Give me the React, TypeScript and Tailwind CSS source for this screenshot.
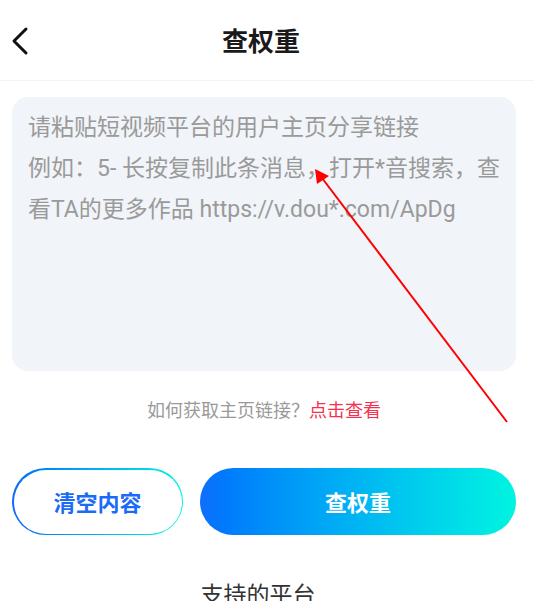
export default function App() {
  return (
    <div
      className="relative w-[534px] h-[601px] overflow-hidden bg-white"
      style={{ fontFamily: '"Noto Sans CJK SC", "Noto Sans", sans-serif' }}
    >
      <div className="relative h-[81px] border-b border-[#f4f4f4] flex items-center justify-center pr-[12px]">
        <svg className="absolute left-[10px] top-[26px]" width="20" height="30" viewBox="0 0 20 30">
          <polyline points="16,3 4,15 16,27" fill="none" stroke="#111" strokeWidth="3" strokeLinecap="round" strokeLinejoin="round" />
        </svg>
        <h1 className="text-[26px] font-bold text-[#1a1a1a] leading-none">查权重</h1>
      </div>

      <div className="w-[528px] px-3">
        <div className="h-[274px] mt-4 rounded-[16px] bg-[#f1f4f8] px-4 pt-[10px]">
          <p
            className="text-[23px] leading-[41px] text-[#9a9a9a]"
            style={{ fontFamily: 'Roboto, "Noto Sans CJK SC", sans-serif' }}
          >
            请粘贴短视频平台的用户主页分享链接
            <br />
            例如：5- 长按复制此条消息，打开*音搜索，查看TA的更多作品 https://v.dou*.com/ApDg
          </p>
        </div>

        <p className="mt-[27px] text-center text-[18px] leading-[22px] text-[#9a9a9a]">
          如何获取主页链接？<span className="text-[#f5314e]">点击查看</span>
        </p>

        <div className="mt-[48px] flex gap-[17px]">
          <div className="w-[171px] h-[67px] rounded-full p-[1.5px] bg-gradient-to-r from-[#1469f8] to-[#00f2e2]">
            <div className="w-full h-full rounded-full bg-white flex items-center justify-center text-[22px] font-bold text-[#1a6cf6]">
              清空内容
            </div>
          </div>
          <div className="flex-1 h-[67px] rounded-full bg-gradient-to-r from-[#0f6efd] to-[#00f4e0] flex items-center justify-center text-[22px] font-bold text-white">
            查权重
          </div>
        </div>

        <p className="mt-[46px] pr-3 text-center text-[23px] leading-[24px] text-[#333]">支持的平台</p>
      </div>

      <svg className="absolute left-0 top-0 pointer-events-none" width="534" height="601" viewBox="0 0 534 601">
        <line x1="507" y1="422" x2="322" y2="178" stroke="#ff0000" strokeWidth="2" />
        <polygon points="315,169 317,184 329,176" fill="#ff0000" />
      </svg>
    </div>
  );
}
